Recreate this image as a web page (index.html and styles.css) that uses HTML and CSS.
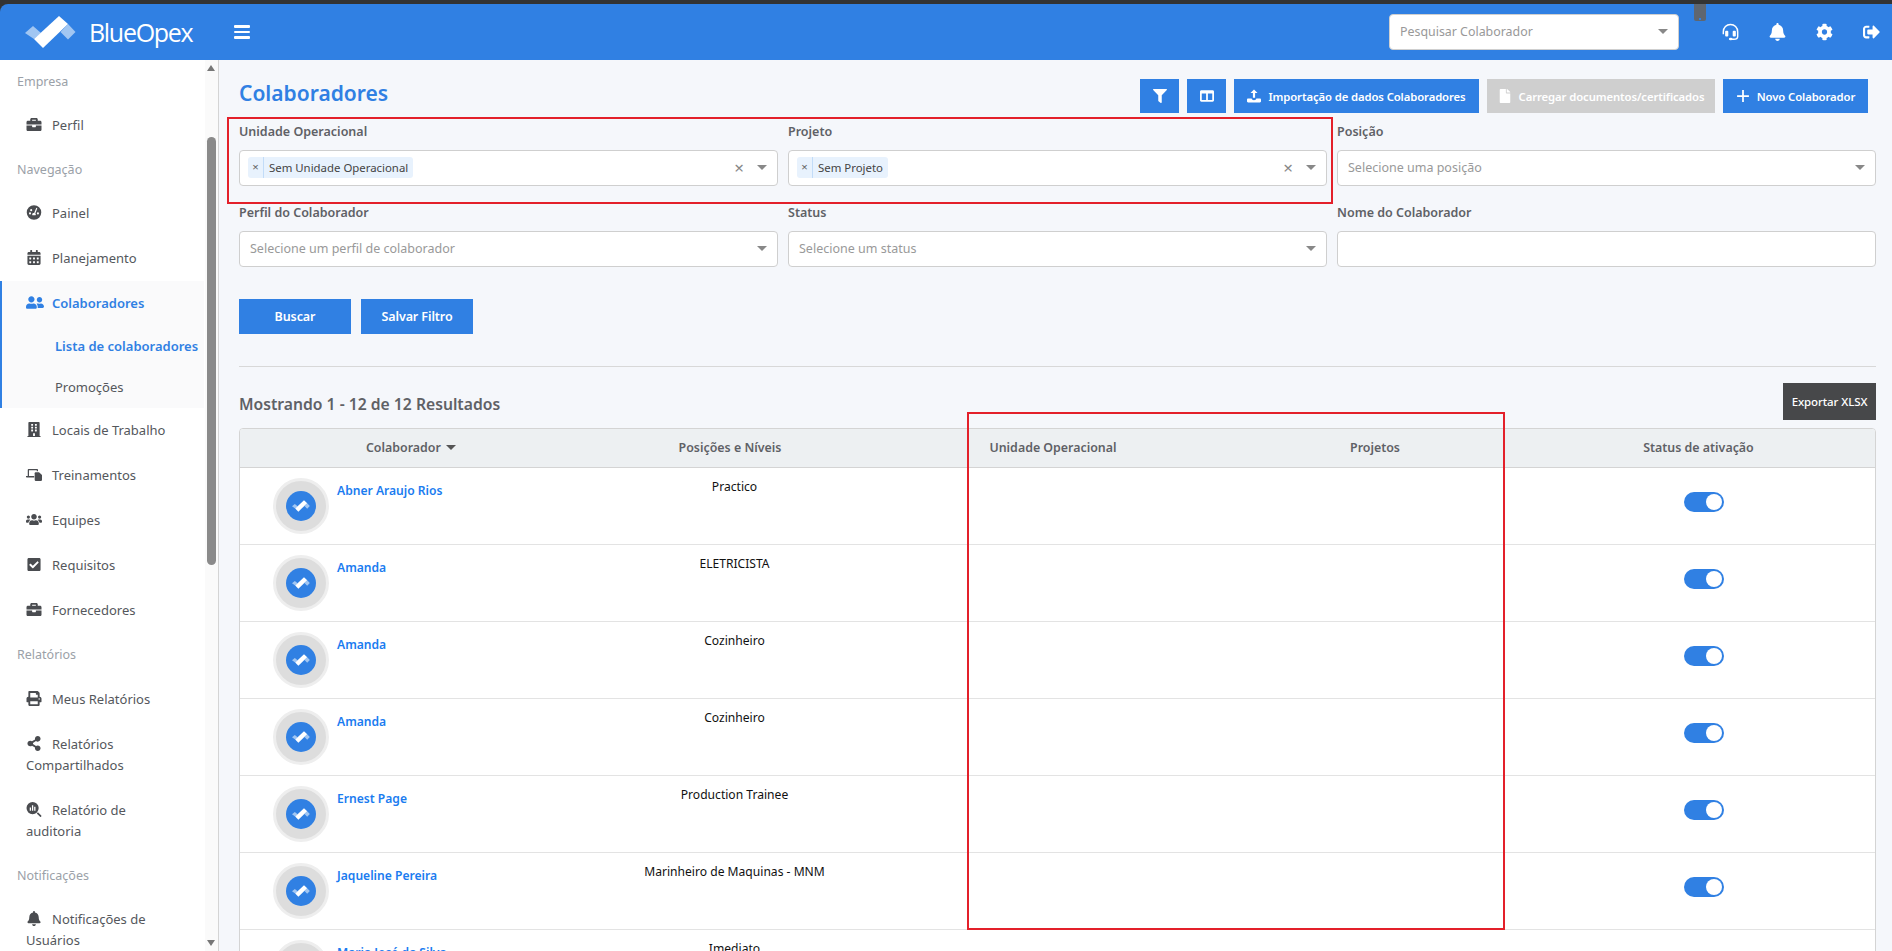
FILE: index.html
```html
<!DOCTYPE html>
<html lang="pt-BR">
<head>
    <meta charset="utf-8">
    <title>Colaboradores</title>
    <link rel="stylesheet" href="styles.css">
</head>
<body>
    <svg class="sprite" xmlns="http://www.w3.org/2000/svg">
        <symbol id="i-logo" viewBox="0 0 51 32">
            <polygon fill="currentColor" opacity=".55" points="0,17 8,10 16,17 9,23"/>
            <polygon fill="currentColor" opacity=".55" points="43,8 50.5,16 43,23.5 35.5,16"/>
            <polygon fill="currentColor" points="9,23 34,0 43,8 18,32"/>
        </symbol>
        <symbol id="i-filter" viewBox="0 0 512 512"><path d="M487.976 0H24.028C2.71 0-8.047 25.866 7.058 40.971L192 225.941V432c0 7.831 3.821 15.17 10.237 19.662l80 55.98C298.02 518.69 320 507.493 320 487.98V225.941l184.947-184.97C520.021 25.896 509.338 0 487.976 0z"/></symbol>
        <symbol id="i-bell" viewBox="0 0 448 512"><path d="M224 512c35.32 0 63.97-28.65 63.97-64H160.03c0 35.35 28.65 64 63.97 64zm215.39-149.71c-19.32-20.76-55.47-51.99-55.47-154.29 0-77.7-54.48-139.9-127.94-155.16V32c0-17.67-14.32-32-31.98-32s-31.98 14.33-31.98 32v20.84C118.56 68.1 64.08 130.3 64.08 208c0 102.3-36.15 133.53-55.47 154.29-6 6.45-8.66 14.16-8.61 21.71.11 16.4 12.98 32 32.1 32h383.8c19.12 0 32-15.6 32.1-32 .05-7.55-2.61-15.27-8.61-21.71z"/></symbol>
        <symbol id="i-cog" viewBox="0 0 512 512"><path d="M487.4 315.7l-42.6-24.6c4.3-23.2 4.3-47 0-70.2l42.6-24.6c4.9-2.8 7.1-8.6 5.5-14-11.1-35.6-30-67.8-54.7-94.6-3.8-4.1-10-5.1-14.8-2.3L380.8 110c-17.9-15.4-38.5-27.3-60.8-35.1V25.8c0-5.6-3.9-10.5-9.4-11.7-36.7-8.2-74.3-7.8-109.2 0-5.5 1.2-9.4 6.1-9.4 11.7V75c-22.2 7.9-42.8 19.8-60.8 35.1L88.7 85.5c-4.9-2.8-11-1.9-14.8 2.3-24.7 26.7-43.6 58.9-54.7 94.6-1.7 5.4.6 11.2 5.5 14L67.3 221c-4.3 23.2-4.3 47 0 70.2l-42.6 24.6c-4.9 2.8-7.1 8.6-5.5 14 11.1 35.6 30 67.8 54.7 94.6 3.8 4.1 10 5.1 14.8 2.3l42.6-24.6c17.9 15.4 38.5 27.3 60.8 35.1v49.2c0 5.6 3.9 10.5 9.4 11.7 36.7 8.2 74.3 7.8 109.2 0 5.5-1.2 9.4-6.1 9.4-11.7v-49.2c22.2-7.9 42.8-19.8 60.8-35.1l42.6 24.6c4.9 2.8 11 1.9 14.8-2.3 24.7-26.7 43.6-58.9 54.7-94.6 1.5-5.5-.7-11.3-5.6-14.1zM256 336c-44.1 0-80-35.9-80-80s35.9-80 80-80 80 35.9 80 80-35.9 80-80 80z"/></symbol>
        <symbol id="i-signout" viewBox="0 0 512 512"><path d="M497 273L329 441c-15 15-41 4.5-41-17v-96H152c-13.3 0-24-10.7-24-24v-96c0-13.3 10.7-24 24-24h136V88c0-21.4 25.9-32 41-17l168 168c9.3 9.4 9.3 24.6 0 34zM192 436v-40c0-6.6-5.4-12-12-12H96c-17.7 0-32-14.3-32-32V160c0-17.7 14.3-32 32-32h84c6.6 0 12-5.4 12-12V76c0-6.6-5.4-12-12-12H96c-53 0-96 43-96 96v192c0 53 43 96 96 96h84c6.6 0 12-5.4 12-12z"/></symbol>
        <symbol id="i-headset" viewBox="0 0 512 512"><path fill="none" stroke="currentColor" stroke-width="44" d="M40 320V250C40 125 135 30 256 30s216 95 216 220v140c0 55-45 85-120 85h-50"/><rect x="95" y="215" width="95" height="180" rx="30"/><rect x="322" y="215" width="95" height="180" rx="30"/><ellipse cx="262" cy="470" rx="55" ry="38"/></symbol>
        <symbol id="i-briefcase" viewBox="0 0 512 512"><path d="M320 336c0 8.84-7.16 16-16 16h-96c-8.84 0-16-7.16-16-16v-48H0v144c0 25.6 22.4 48 48 48h416c25.6 0 48-22.4 48-48V288H320v48zm144-208h-80V80c0-25.6-22.4-48-48-48H176c-25.6 0-48 22.4-48 48v48H48c-25.6 0-48 22.4-48 48v80h512v-80c0-25.6-22.4-48-48-48zm-144 0H192V96h128v32z"/></symbol>
        <symbol id="i-gauge" viewBox="0 0 512 512"><path fill-rule="evenodd" d="M256 8a248 248 0 1 0 0 496 248 248 0 0 0 0-496zM120 250a36 36 0 1 1 0 72 36 36 0 0 1 0-72zm40-110a36 36 0 1 1 0 72 36 36 0 0 1 0-72zm230 110a36 36 0 1 1 0 72 36 36 0 0 1 0-72zM335 95l34 14-68 178c18 16 22 42 10 62H200c-14-30 2-66 36-74 10-2 18-2 26-1z"/></symbol>
        <symbol id="i-calendar" viewBox="0 0 448 512"><path d="M0 464c0 26.5 21.5 48 48 48h352c26.5 0 48-21.5 48-48V192H0v272zm320-196c0-6.6 5.4-12 12-12h40c6.6 0 12 5.4 12 12v40c0 6.6-5.4 12-12 12h-40c-6.6 0-12-5.4-12-12v-40zm0 128c0-6.6 5.4-12 12-12h40c6.6 0 12 5.4 12 12v40c0 6.6-5.4 12-12 12h-40c-6.6 0-12-5.4-12-12v-40zM192 268c0-6.6 5.4-12 12-12h40c6.6 0 12 5.4 12 12v40c0 6.6-5.4 12-12 12h-40c-6.6 0-12-5.4-12-12v-40zm0 128c0-6.6 5.4-12 12-12h40c6.6 0 12 5.4 12 12v40c0 6.6-5.4 12-12 12h-40c-6.6 0-12-5.4-12-12v-40zM64 268c0-6.6 5.4-12 12-12h40c6.6 0 12 5.4 12 12v40c0 6.6-5.4 12-12 12H76c-6.6 0-12-5.4-12-12v-40zm0 128c0-6.6 5.4-12 12-12h40c6.6 0 12 5.4 12 12v40c0 6.6-5.4 12-12 12H76c-6.6 0-12-5.4-12-12v-40zM400 64h-48V16c0-8.8-7.2-16-16-16h-32c-8.8 0-16 7.2-16 16v48H160V16c0-8.8-7.2-16-16-16h-32c-8.8 0-16 7.2-16 16v48H48C21.5 64 0 85.5 0 112v48h448v-48c0-26.5-21.5-48-48-48z"/></symbol>
        <symbol id="i-friends" viewBox="0 0 640 512"><path d="M192 256c61.9 0 112-50.1 112-112S253.9 32 192 32 80 82.1 80 144s50.1 112 112 112zm76.8 32h-8.3c-20.8 10-43.9 16-68.5 16s-47.6-6-68.5-16h-8.3C51.6 288 0 339.6 0 403.2V432c0 26.5 21.5 48 48 48h288c26.5 0 48-21.5 48-48v-28.8c0-63.6-51.6-115.2-115.2-115.2zM480 256c53 0 96-43 96-96s-43-96-96-96-96 43-96 96 43 96 96 96zm48 32h-3.8c-13.9 4.8-28.6 8-44.2 8s-30.3-3.2-44.2-8H432c-20.4 0-39.2 5.9-55.7 15.4 24.4 26.3 39.7 61.2 39.7 99.8v38.4c0 2.2-.5 4.3-.6 6.4H592c26.5 0 48-21.5 48-48 0-61.9-50.1-112-112-112z"/></symbol>
        <symbol id="i-building" viewBox="0 0 448 512"><path d="M436 480h-20V24c0-13.255-10.745-24-24-24H56C42.745 0 32 10.745 32 24v456H12c-6.627 0-12 5.373-12 12v20h448v-20c0-6.627-5.373-12-12-12zM128 76c0-6.627 5.373-12 12-12h40c6.627 0 12 5.373 12 12v40c0 6.627-5.373 12-12 12h-40c-6.627 0-12-5.373-12-12V76zm0 96c0-6.627 5.373-12 12-12h40c6.627 0 12 5.373 12 12v40c0 6.627-5.373 12-12 12h-40c-6.627 0-12-5.373-12-12v-40zm52 148h-40c-6.627 0-12-5.373-12-12v-40c0-6.627 5.373-12 12-12h40c6.627 0 12 5.373 12 12v40c0 6.627-5.373 12-12 12zm76 160h-64v-84c0-6.627 5.373-12 12-12h40c6.627 0 12 5.373 12 12v84zm64-172c0 6.627-5.373 12-12 12h-40c-6.627 0-12-5.373-12-12v-40c0-6.627 5.373-12 12-12h40c6.627 0 12 5.373 12 12v40zm0-96c0 6.627-5.373 12-12 12h-40c-6.627 0-12-5.373-12-12v-40c0-6.627 5.373-12 12-12h40c6.627 0 12 5.373 12 12v40zm0-96c0 6.627-5.373 12-12 12h-40c-6.627 0-12-5.373-12-12V76c0-6.627 5.373-12 12-12h40c6.627 0 12 5.373 12 12v40z"/></symbol>
        <symbol id="i-training" viewBox="0 0 640 512"><path fill-rule="evenodd" d="M110 40h330c22 0 40 18 40 40v50h-50V90H120v230h210v60H30c-16 0-30-14-30-30v-30h70V80c0-22 18-40 40-40z"/><path d="M380 170h140l120 110v200c0 18-14 32-32 32H380c-18 0-32-14-32-32V202c0-18 14-32 32-32z"/></symbol>
        <symbol id="i-users" viewBox="0 0 640 512"><path d="M96 224c35.3 0 64-28.7 64-64s-28.7-64-64-64-64 28.7-64 64 28.7 64 64 64zm448 0c35.3 0 64-28.7 64-64s-28.7-64-64-64-64 28.7-64 64 28.7 64 64 64zm32 32h-64c-17.6 0-33.5 7.1-45.1 18.6 40.3 22.1 68.9 62 75.1 109.4h66c17.7 0 32-14.3 32-32v-32c0-35.3-28.7-64-64-64zm-256 0c61.9 0 112-50.1 112-112S381.9 32 320 32 208 82.1 208 144s50.1 112 112 112zm76.8 32h-8.3c-20.8 10-43.9 16-68.5 16s-47.6-6-68.5-16h-8.3C179.6 288 128 339.6 128 403.2V432c0 26.5 21.5 48 48 48h288c26.5 0 48-21.5 48-48v-28.8c0-63.6-51.6-115.2-115.2-115.2zm-223.7-13.4C161.5 263.1 145.6 256 128 256H64c-35.3 0-64 28.7-64 64v32c0 17.7 14.3 32 32 32h65.9c6.3-47.4 34.9-87.3 75.2-109.4z"/></symbol>
        <symbol id="i-check" viewBox="0 0 448 512"><path d="M400 480H48c-26.51 0-48-21.49-48-48V80c0-26.51 21.49-48 48-48h352c26.51 0 48 21.49 48 48v352c0 26.51-21.49 48-48 48zm-204.686-98.059l184-184c6.248-6.248 6.248-16.379 0-22.627l-22.627-22.627c-6.248-6.248-16.379-6.249-22.628 0L184 302.745l-70.059-70.059c-6.248-6.248-16.379-6.248-22.628 0l-22.627 22.627c-6.248 6.248-6.248 16.379 0 22.627l104 104c6.249 6.25 16.379 6.25 22.628.001z"/></symbol>
        <symbol id="i-print" viewBox="0 0 512 512"><path d="M448 192V77.25c0-8.49-3.37-16.62-9.37-22.63L393.37 9.37c-6-6-14.14-9.37-22.63-9.37H96C78.33 0 64 14.33 64 32v160c-35.35 0-64 28.65-64 64v112c0 8.84 7.16 16 16 16h48v96c0 17.67 14.33 32 32 32h320c17.67 0 32-14.33 32-32v-96h48c8.84 0 16-7.16 16-16V256c0-35.35-28.65-64-64-64zm-64 256H128v-96h256v96zm0-224H128V64h192v48c0 8.84 7.16 16 16 16h48v96zm48 72c-13.25 0-24-10.75-24-24 0-13.26 10.75-24 24-24s24 10.74 24 24c0 13.25-10.75 24-24 24z"/></symbol>
        <symbol id="i-share" viewBox="0 0 448 512"><path d="M352 320c-22.608 0-43.387 7.819-59.79 20.895l-102.486-64.054a96.551 96.551 0 0 0 0-41.683l102.486-64.054C308.613 184.181 329.392 192 352 192c53.019 0 96-42.981 96-96S405.019 0 352 0s-96 42.981-96 96c0 7.158.79 14.13 2.276 20.841L155.79 180.895C139.387 167.819 118.608 160 96 160c-53.019 0-96 42.981-96 96s42.981 96 96 96c22.608 0 43.387-7.819 59.79-20.895l102.486 64.054A96.301 96.301 0 0 0 256 416c0 53.019 42.981 96 96 96s96-42.981 96-96-42.981-96-96-96z"/></symbol>
        <symbol id="i-audit" viewBox="0 0 512 512"><path fill-rule="evenodd" d="M208 0a208 208 0 1 0 0 416 208 208 0 0 0 0-416zM110 190h44v110h-44zm76-80h44v190h-44zm76 50h44v140h-44z"/><path d="M350 390l40-40 114 114c8 8 8 20 0 28l-12 12c-8 8-20 8-28 0z"/></symbol>
        <symbol id="i-columns" viewBox="0 0 512 512"><path fill-rule="evenodd" d="M50 50h412c28 0 50 22 50 50v312c0 28-22 50-50 50H50c-28 0-50-22-50-50V100c0-28 22-50 50-50zm14 110v238h160V160zm224 0v238h160V160z"/></symbol>
        <symbol id="i-upload" viewBox="0 0 512 512"><path d="M256 20l130 130H296v170h-80V150h-90z"/><path d="M40 350h130c10 40 40 60 86 60s76-20 86-60h130c22 0 40 18 40 40v60c0 22-18 40-40 40H40c-22 0-40-18-40-40v-60c0-22 18-40 40-40z"/></symbol>
        <symbol id="i-file" viewBox="0 0 384 512"><path d="M224 136V0H24C10.7 0 0 10.7 0 24v464c0 13.3 10.7 24 24 24h336c13.3 0 24-10.7 24-24V160H248c-13.2 0-24-10.8-24-24zm160-14.1v6.1H256V0h6.1c6.4 0 12.5 2.5 17 7l97.9 98c4.5 4.5 7 10.6 7 16.9z"/></symbol>
        <symbol id="i-plus" viewBox="0 0 448 512"><path d="M192 40h64v184h184v64H256v184h-64V288H8v-64h184z"/></symbol>
    </svg>

    <header class="topbar">
        <div class="brand">
            <svg class="brand-mark"><use href="#i-logo"/></svg>
            <span class="brand-name">BlueOpex</span>
        </div>
        <button class="menu-toggle" aria-label="Menu"><span></span><span></span><span></span></button>
        <div class="topbar-right">
            <div class="select search-select"><span class="placeholder">Pesquisar Colaborador</span><i class="caret"></i></div>
            <svg class="top-icon"><use href="#i-headset"/></svg>
            <svg class="top-icon"><use href="#i-bell"/></svg>
            <svg class="top-icon"><use href="#i-cog"/></svg>
            <svg class="top-icon"><use href="#i-signout"/></svg>
        </div>
    </header>

    <div class="layout">
        <aside class="sidebar">
            <nav class="nav">
                <div class="nav-heading">Empresa</div>
                <a class="nav-item"><svg class="nav-icon"><use href="#i-briefcase"/></svg>Perfil</a>
                <div class="nav-heading">Navegação</div>
                <a class="nav-item"><svg class="nav-icon"><use href="#i-gauge"/></svg>Painel</a>
                <a class="nav-item"><svg class="nav-icon"><use href="#i-calendar"/></svg>Planejamento</a>
                <div class="nav-group">
                    <a class="nav-item active"><svg class="nav-icon"><use href="#i-friends"/></svg>Colaboradores</a>
                    <a class="nav-sub active">Lista de colaboradores</a>
                    <a class="nav-sub">Promoções</a>
                </div>
                <a class="nav-item"><svg class="nav-icon"><use href="#i-building"/></svg>Locais de Trabalho</a>
                <a class="nav-item"><svg class="nav-icon"><use href="#i-training"/></svg>Treinamentos</a>
                <a class="nav-item"><svg class="nav-icon"><use href="#i-users"/></svg>Equipes</a>
                <a class="nav-item"><svg class="nav-icon"><use href="#i-check"/></svg>Requisitos</a>
                <a class="nav-item"><svg class="nav-icon"><use href="#i-briefcase"/></svg>Fornecedores</a>
                <div class="nav-heading nav-heading-tall">Relatórios</div>
                <a class="nav-item"><svg class="nav-icon"><use href="#i-print"/></svg>Meus Relatórios</a>
                <a class="nav-item"><svg class="nav-icon"><use href="#i-share"/></svg>Relatórios Compartilhados</a>
                <a class="nav-item"><svg class="nav-icon"><use href="#i-audit"/></svg>Relatório de auditoria</a>
                <div class="nav-heading">Notificações</div>
                <a class="nav-item"><svg class="nav-icon"><use href="#i-bell"/></svg>Notificações de Usuários</a>
            </nav>
            <div class="scrollbar">
                <i class="scroll-up"></i>
                <i class="scroll-thumb"></i>
                <i class="scroll-down"></i>
            </div>
        </aside>

        <main class="content">
            <div class="page-head">
                <h1>Colaboradores</h1>
                <div class="actions">
                    <button class="btn btn-icon"><svg class="btn-svg"><use href="#i-filter"/></svg></button>
                    <button class="btn btn-icon"><svg class="btn-svg"><use href="#i-columns"/></svg></button>
                    <button class="btn btn-import"><svg class="btn-svg"><use href="#i-upload"/></svg>Importação de dados Colaboradores</button>
                    <button class="btn btn-docs"><svg class="btn-svg"><use href="#i-file"/></svg>Carregar documentos/certificados</button>
                    <button class="btn btn-new"><svg class="btn-svg"><use href="#i-plus"/></svg>Novo Colaborador</button>
                </div>
            </div>

            <div class="filters">
                <div class="field">
                    <label>Unidade Operacional</label>
                    <div class="select"><span class="chip"><b>×</b><span>Sem Unidade Operacional</span></span><em class="clear">×</em><i class="caret"></i></div>
                </div>
                <div class="field">
                    <label>Projeto</label>
                    <div class="select"><span class="chip"><b>×</b><span>Sem Projeto</span></span><em class="clear">×</em><i class="caret"></i></div>
                </div>
                <div class="field">
                    <label>Posição</label>
                    <div class="select"><span class="placeholder">Selecione uma posição</span><i class="caret"></i></div>
                </div>
                <div class="field">
                    <label>Perfil do Colaborador</label>
                    <div class="select"><span class="placeholder">Selecione um perfil de colaborador</span><i class="caret"></i></div>
                </div>
                <div class="field">
                    <label>Status</label>
                    <div class="select"><span class="placeholder">Selecione um status</span><i class="caret"></i></div>
                </div>
                <div class="field">
                    <label>Nome do Colaborador</label>
                    <div class="select"></div>
                </div>
            </div>

            <div class="filter-buttons">
                <button class="btn btn-wide">Buscar</button>
                <button class="btn btn-wide">Salvar Filtro</button>
            </div>

            <hr class="divider">

            <div class="results-head">
                <h2>Mostrando 1 - 12 de 12 Resultados</h2>
                <button class="btn btn-dark">Exportar XLSX</button>
            </div>

            <div class="table-wrap">
                <table class="people">
                    <colgroup>
                        <col class="col-name"><col class="col-pos"><col class="col-unit"><col class="col-proj"><col class="col-status">
                    </colgroup>
                    <thead>
                        <tr>
                            <th>Colaborador <i class="sort-caret"></i></th>
                            <th>Posições e Níveis</th>
                            <th>Unidade Operacional</th>
                            <th>Projetos</th>
                            <th>Status de ativação</th>
                        </tr>
                    </thead>
                    <tbody>
                        <tr>
                            <td><div class="person"><div class="avatar"><span><svg><use href="#i-logo"/></svg></span></div><a>Abner Araujo Rios</a></div></td>
                            <td class="pos">Practico</td><td></td><td></td>
                            <td><div class="toggle"></div></td>
                        </tr>
                        <tr>
                            <td><div class="person"><div class="avatar"><span><svg><use href="#i-logo"/></svg></span></div><a>Amanda</a></div></td>
                            <td class="pos">ELETRICISTA</td><td></td><td></td>
                            <td><div class="toggle"></div></td>
                        </tr>
                        <tr>
                            <td><div class="person"><div class="avatar"><span><svg><use href="#i-logo"/></svg></span></div><a>Amanda</a></div></td>
                            <td class="pos">Cozinheiro</td><td></td><td></td>
                            <td><div class="toggle"></div></td>
                        </tr>
                        <tr>
                            <td><div class="person"><div class="avatar"><span><svg><use href="#i-logo"/></svg></span></div><a>Amanda</a></div></td>
                            <td class="pos">Cozinheiro</td><td></td><td></td>
                            <td><div class="toggle"></div></td>
                        </tr>
                        <tr>
                            <td><div class="person"><div class="avatar"><span><svg><use href="#i-logo"/></svg></span></div><a>Ernest Page</a></div></td>
                            <td class="pos">Production Trainee</td><td></td><td></td>
                            <td><div class="toggle"></div></td>
                        </tr>
                        <tr>
                            <td><div class="person"><div class="avatar"><span><svg><use href="#i-logo"/></svg></span></div><a>Jaqueline Pereira</a></div></td>
                            <td class="pos">Marinheiro de Maquinas - MNM</td><td></td><td></td>
                            <td><div class="toggle"></div></td>
                        </tr>
                        <tr>
                            <td><div class="person"><div class="avatar"><span><svg><use href="#i-logo"/></svg></span></div><a>Maria José da Silva</a></div></td>
                            <td class="pos">Imediato</td><td></td><td></td>
                            <td><div class="toggle"></div></td>
                        </tr>
                    </tbody>
                </table>
            </div>
        </main>
    </div>

    <!-- marcas vermelhas por cima do print -->
    <div class="mark mark-filters"></div>
    <div class="mark mark-columns"></div>
    <div class="phone-tab"><i></i></div>
</body>
</html>
```

FILE: styles.css
```css
* {
    box-sizing: border-box;
}

html,
body {
    height: 951px;
    margin: 0;
    overflow: hidden;
}

body {
    position: relative;
    padding-top: 4px;
    background-color: #333;
    font-family: "Noto Sans", "Open Sans", sans-serif;
    font-size: 13px;
    color: #54575c;
}

.sprite {
    display: none;
}

/* barra superior */
.topbar {
    display: flex;
    align-items: center;
    height: 56px;
    padding: 0 0 0 25px;
    border-radius: 8px 0 0 0;
    background-color: #3080e3;
    color: #fff;
}

.brand {
    display: flex;
    align-items: center;
    width: 209px;
}

.brand-mark {
    width: 51px;
    height: 32px;
    margin-right: 13px;
    color: #fff;
}

.brand-name {
    font-family: "Open Sans", sans-serif;
    font-size: 25px;
    letter-spacing: -1.3px;
}

.menu-toggle {
    display: flex;
    flex-direction: column;
    gap: 3px;
    width: 16px;
    padding: 0;
    border: none;
    background: none;
}

.menu-toggle span {
    display: block;
    height: 2.5px;
    border-radius: 1px;
    background-color: #fff;
}

.topbar-right {
    display: flex;
    align-items: center;
    margin-left: auto;
}

.search-select {
    width: 290px;
    margin-right: 43px;
}

.search-select .placeholder {
    font-size: 12.4px;
}

.top-icon {
    width: 17px;
    height: 18px;
    margin-right: 30px;
    fill: #fff;
    color: #fff;
}

.top-icon:last-child {
    margin-right: 12px;
}

/* colunas */
.layout {
    display: flex;
    height: 891px;
    background-color: #f5f7fb;
}

.sidebar {
    position: relative;
    width: 219px;
    flex-shrink: 0;
    overflow: hidden;
    border-right: 1px solid #d4d4d4;
    background-color: #fff;
}

.nav {
    width: 204px;
}

.nav-heading {
    height: 43px;
    padding-left: 17px;
    color: #9ba1a8;
    font-size: 12.5px;
    line-height: 43px;
}

.nav-heading-tall {
    height: 44px;
}

.nav-item {
    display: block;
    padding: 12px 30px 12px 26px;
    line-height: 21px;
    color: #54575c;
}

.nav-icon {
    width: 16px;
    height: 15px;
    margin-right: 10px;
    vertical-align: -2px;
    fill: #4a4c50;
}

.nav-group {
    border-left: 2px solid #3080e3;
    background-color: #fafafb;
}

.nav-group .nav-item {
    padding-left: 24px;
}

.nav-item.active,
.nav-sub.active {
    color: #3080e3;
    font-weight: 600;
}

.nav-item.active .nav-icon {
    width: 18px;
    margin-right: 8px;
    fill: #3080e3;
}

.nav-sub {
    display: block;
    height: 41px;
    padding-left: 53px;
    line-height: 41px;
    white-space: nowrap;
}

.scrollbar {
    position: absolute;
    top: 0;
    right: 0;
    bottom: 0;
    width: 13px;
    background-color: #fafafa;
}

.scroll-thumb {
    position: absolute;
    top: 77px;
    left: 2px;
    width: 9px;
    height: 428px;
    border-radius: 5px;
    background-color: #8a8a8a;
}

.scroll-up,
.scroll-down {
    position: absolute;
    left: 2px;
    width: 0;
    height: 0;
    border-left: 4.5px solid transparent;
    border-right: 4.5px solid transparent;
}

.scroll-up {
    top: 5px;
    border-bottom: 6px solid #777;
}

.scroll-down {
    bottom: 5px;
    border-top: 6px solid #777;
}

/* area principal */
.content {
    flex: 1;
    min-width: 0;
    padding: 19px 16px 0 20px;
}

.page-head {
    display: flex;
    align-items: flex-start;
    justify-content: space-between;
    height: 34px;
    margin-bottom: 8px;
}

h1 {
    margin: 0;
    color: #3080e3;
    font-size: 21px;
    font-weight: 600;
    line-height: 28px;
}

.actions {
    display: flex;
    gap: 8px;
    margin-right: 8px;
}

.btn {
    display: inline-flex;
    align-items: center;
    justify-content: center;
    height: 34px;
    padding: 0;
    border: none;
    background-color: #3080e3;
    color: #fff;
    font-family: inherit;
    font-size: 11.3px;
    font-weight: 600;
    letter-spacing: -.1px;
    white-space: nowrap;
}

.btn-icon {
    width: 39px;
}

.btn-import {
    width: 245px;
}

.btn-docs {
    width: 228px;
    background-color: #cfcfcf;
}

.btn-new {
    width: 145px;
}

.btn-svg {
    width: 14px;
    height: 14px;
    margin-right: 7px;
    fill: #fff;
}

.btn-icon .btn-svg {
    margin-right: 0;
}

.btn-wide {
    width: 112px;
    height: 35px;
    font-size: 12.5px;
}

.btn-dark {
    width: 93px;
    height: 37px;
    background-color: #47484a;
    font-size: 11.5px;
    font-weight: 500;
}

/* filtros */
.filters {
    display: grid;
    grid-template-columns: repeat(3, 1fr);
    gap: 16px 10px;
}

.field label {
    display: block;
    height: 20px;
    margin-bottom: 9px;
    padding-top: 1px;
    color: #5f6166;
    font-size: 12.5px;
    font-weight: 600;
    line-height: 20px;
}

.select {
    display: flex;
    align-items: center;
    height: 36px;
    padding: 0 10px 1px 8px;
    border: 1px solid #cfcfcf;
    border-radius: 4px;
    background-color: #fff;
}

.placeholder {
    padding-left: 2px;
    color: #999;
    font-size: 12.5px;
}

.chip {
    display: flex;
    align-items: center;
    height: 21px;
    border-radius: 3px;
    background-color: #e8f2fd;
    color: #444;
    font-size: 11.4px;
}

.chip b {
    width: 16px;
    height: 100%;
    border-right: 1px solid #c2dcf8;
    color: #666;
    font-weight: 400;
    line-height: 20px;
    text-align: center;
}

.chip span {
    padding: 0 5px;
}

.clear {
    margin-left: auto;
    margin-right: 13px;
    color: #888;
    font-size: 17px;
    font-style: normal;
}

.caret {
    width: 0;
    height: 0;
    border-left: 5px solid transparent;
    border-right: 5px solid transparent;
    border-top: 5px solid #888;
}

.placeholder + .caret,
.select > .caret:only-child {
    margin-left: auto;
}

.filter-buttons {
    display: flex;
    gap: 10px;
    margin-top: 32px;
}

.divider {
    height: 1px;
    margin: 32px 0 16px;
    border: none;
    background-color: #d8d8d8;
}

.results-head {
    display: flex;
    align-items: center;
    justify-content: space-between;
    margin-bottom: 8px;
}

h2 {
    margin: 5px 0 0;
    color: #5f6166;
    font-size: 15.7px;
    font-weight: 600;
}

/* tabela */
.table-wrap {
    overflow: hidden;
    border: 1px solid #d4d4d4;
    border-radius: 4px 4px 0 0;
    background-color: #fff;
}

.people {
    width: 100%;
    border-collapse: collapse;
    table-layout: fixed;
}

.col-name {
    width: 342px;
}

.col-pos {
    width: 296px;
}

.col-unit {
    width: 350px;
}

.col-proj {
    width: 294px;
}

.people th {
    height: 38px;
    padding: 0 0 1px;
    border-bottom: 1px solid #d4d4d4;
    background-color: #edf0f2;
    color: #5f6166;
    font-size: 12.4px;
    font-weight: 600;
}

.sort-caret {
    display: inline-block;
    width: 0;
    height: 0;
    margin-left: 2px;
    vertical-align: 2px;
    border-left: 5px solid transparent;
    border-right: 5px solid transparent;
    border-top: 5px solid #555;
}

.people td {
    height: 77px;
    padding: 0;
    border-bottom: 1px solid #e3e3e3;
    vertical-align: top;
}

.people .pos {
    padding: 10px 0 0 9px;
    color: #111;
    font-size: 12.1px;
    line-height: 18px;
    text-align: center;
}

.person {
    display: flex;
    padding: 10px 0 0 33px;
}

.person a {
    margin: 4px 0 0 8px;
    color: #1a7cf0;
    font-size: 12.1px;
    font-weight: 600;
    line-height: 18px;
}

.avatar {
    display: flex;
    align-items: center;
    justify-content: center;
    width: 56px;
    height: 56px;
    border: 3px solid #eee;
    border-radius: 50%;
    background-color: #ddd;
}

.avatar span {
    display: flex;
    align-items: center;
    justify-content: center;
    width: 30px;
    height: 30px;
    border-radius: 50%;
    background-color: #3080e3;
}

.avatar svg {
    width: 18px;
    height: 12px;
    color: #fff;
}

.toggle {
    position: relative;
    width: 40px;
    height: 20px;
    margin: 24px 0 0 162px;
    border-radius: 10px;
    background-color: #3080e3;
}

.toggle::after {
    content: "";
    position: absolute;
    top: 2px;
    right: 2px;
    width: 16px;
    height: 16px;
    border-radius: 50%;
    background-color: #fff;
}

/* marcas por cima do conteudo */
.mark {
    position: absolute;
    border: 2px solid #e3202a;
    pointer-events: none;
}

.mark-filters {
    left: 227px;
    top: 117px;
    width: 1106px;
    height: 87px;
}

.mark-columns {
    left: 967px;
    top: 412px;
    width: 538px;
    height: 518px;
}

.phone-tab {
    position: absolute;
    left: 1694px;
    top: 4px;
    width: 12px;
    height: 17px;
    border-radius: 0 0 2px 2px;
    background-color: #5f6670;
}

.phone-tab i {
    position: absolute;
    left: 5px;
    bottom: 1px;
    width: 2px;
    height: 2px;
    background-color: #3080e3;
}
```
